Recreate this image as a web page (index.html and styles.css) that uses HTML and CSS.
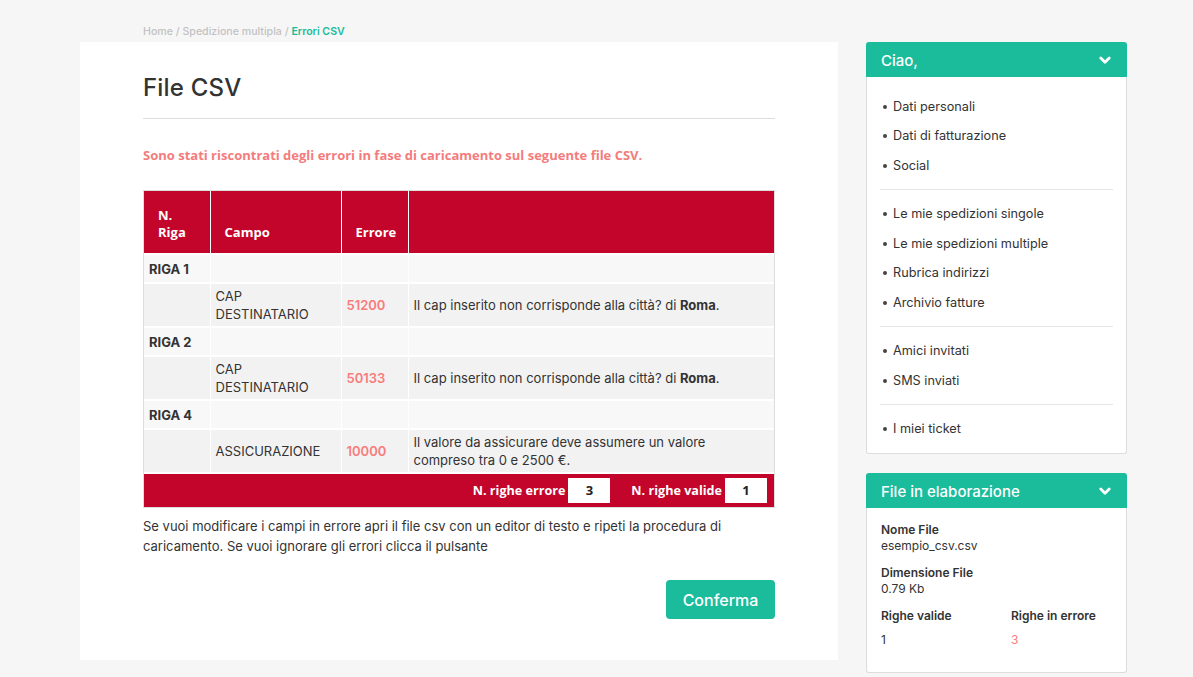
FILE: index.html
```html
<!DOCTYPE html>
<html lang="it">
<head>
<meta charset="utf-8">
<title>Errori CSV</title>
<link rel="stylesheet" href="styles.css">
</head>
<body>
<div class="page">
  <div class="main-col">
    <div class="breadcrumb">
      <span class="crumb">Home</span> <span class="sep">/</span> <span class="crumb">Spedizione multipla</span> <span class="sep">/</span> <span class="crumb active">Errori CSV</span>
    </div>
    <div class="main-card">
      <h1 class="title">File CSV</h1>
      <hr class="rule">
      <p class="error-msg">Sono stati riscontrati degli errori in fase di caricamento sul seguente file CSV.</p>
      <div class="table-wrap">
        <table class="err-table">
          <colgroup>
            <col class="c1"><col class="c2"><col class="c3"><col class="c4">
          </colgroup>
          <thead>
            <tr>
              <th>N.<br>Riga</th>
              <th>Campo</th>
              <th>Errore</th>
              <th></th>
            </tr>
          </thead>
          <tbody>
            <tr class="riga"><td class="rlabel">RIGA 1</td><td></td><td></td><td></td></tr>
            <tr class="data"><td></td><td>CAP<br>DESTINATARIO</td><td class="val">51200</td><td>Il cap inserito non corrisponde alla città? di <b>Roma</b>.</td></tr>
            <tr class="riga"><td class="rlabel">RIGA 2</td><td></td><td></td><td></td></tr>
            <tr class="data"><td></td><td>CAP<br>DESTINATARIO</td><td class="val">50133</td><td>Il cap inserito non corrisponde alla città? di <b>Roma</b>.</td></tr>
            <tr class="riga"><td class="rlabel">RIGA 4</td><td></td><td></td><td></td></tr>
            <tr class="data"><td></td><td>ASSICURAZIONE</td><td class="val">10000</td><td>Il valore da assicurare deve assumere un valore compreso tra 0 e 2500 €.</td></tr>
          </tbody>
          <tfoot>
            <tr>
              <td colspan="4">
                <div class="totals">
                  <span class="tlabel">N. righe errore</span><span class="tbox">3</span>
                  <span class="tlabel second">N. righe valide</span><span class="tbox">1</span>
                </div>
              </td>
            </tr>
          </tfoot>
        </table>
      </div>
      <p class="note">Se vuoi modificare i campi in errore apri il file csv con un editor di testo e ripeti la procedura di caricamento. Se vuoi ignorare gli errori clicca il pulsante</p>
      <div class="actions"><button class="btn">Conferma</button></div>
    </div>
  </div>
  <aside class="sidebar">
    <div class="panel">
      <div class="panel-head"><span>Ciao,</span>
        <svg class="chev" width="12" height="9" viewBox="0 0 12 9"><polyline points="1.8,2 6,6.2 10.2,2" fill="none" stroke="#fff" stroke-width="2.8" stroke-linecap="round" stroke-linejoin="round"/></svg>
      </div>
      <div class="panel-body menu">
        <ul class="group">
          <li>Dati personali</li>
          <li>Dati di fatturazione</li>
          <li>Social</li>
        </ul>
        <ul class="group">
          <li>Le mie spedizioni singole</li>
          <li>Le mie spedizioni multiple</li>
          <li>Rubrica indirizzi</li>
          <li>Archivio fatture</li>
        </ul>
        <ul class="group">
          <li>Amici invitati</li>
          <li>SMS inviati</li>
        </ul>
        <ul class="group">
          <li>I miei ticket</li>
        </ul>
      </div>
    </div>
    <div class="panel">
      <div class="panel-head"><span>File in elaborazione</span>
        <svg class="chev" width="12" height="9" viewBox="0 0 12 9"><polyline points="1.8,2 6,6.2 10.2,2" fill="none" stroke="#fff" stroke-width="2.8" stroke-linecap="round" stroke-linejoin="round"/></svg>
      </div>
      <div class="panel-body info">
        <div class="field"><div class="flabel">Nome File</div><div class="fval">esempio_csv.csv</div></div>
        <div class="field"><div class="flabel">Dimensione File</div><div class="fval">0.79 Kb</div></div>
        <div class="cols">
          <div class="col"><div class="flabel">Righe valide</div><div class="fnum">1</div></div>
          <div class="col"><div class="flabel">Righe in errore</div><div class="fnum red">3</div></div>
        </div>
      </div>
    </div>
  </aside>
</div>
</body>
</html>
```
FILE: styles.css
```css
html, body {
  margin: 0;
  padding: 0;
}
body {
  background: #f6f6f6;
  font-family: "Inter", "Liberation Sans", sans-serif;
  color: #333;
  width: 1193px;
  height: 677px;
  overflow: hidden;
}
.page {
  display: flex;
  align-items: flex-start;
  padding-left: 80px;
  gap: 28px;
}
.main-col {
  width: 758px;
}
.breadcrumb {
  height: 42px;
  box-sizing: border-box;
  padding: 26px 0 0 63px;
  font-family: "Inter", sans-serif;
  font-size: 10.6px;
  font-weight: 500;
  line-height: 12px;
  color: #c2c2c2;
}
.breadcrumb .active {
  color: #1abc9c;
  font-weight: 600;
}
.main-card {
  background: #fff;
  height: 618px;
  box-sizing: border-box;
  padding: 31px 63px 0 63px;
}
.title {
  margin: 0;
  font-family: "Inter", sans-serif;
  font-size: 24px;
  font-weight: 500;
  line-height: 29px;
  color: #333;
  letter-spacing: 0.2px;
}
.rule {
  border: 0;
  border-top: 1px solid #ddd;
  margin: 16px 0 0 0;
}
.error-msg {
  margin: 27px 0 0 0;
  font-family: "Open Sans", sans-serif;
  font-size: 13px;
  font-weight: 700;
  line-height: 18px;
  color: #f47c7c;
}
.table-wrap {
  margin-top: 26px;
  border: 1px solid #ddd;
}
.err-table {
  width: 100%;
  border-collapse: collapse;
  table-layout: fixed;
  font-size: 13px;
  line-height: 18px;
}
.c1 { width: 66px; }
.c2 { width: 131px; }
.c3 { width: 67px; }
.err-table th {
  background: #c3052b;
  color: #fff;
  font-family: "Open Sans", sans-serif;
  font-weight: 700;
  font-size: 13px;
  line-height: 17px;
  text-align: left;
  vertical-align: bottom;
  height: 63px;
  box-sizing: border-box;
  padding: 0 6px 12px 14px;
  border-left: 1px solid #fff;
  border-bottom: 1px solid #fff;
}
.err-table th:first-child { border-left: 0; }
.err-table td {
  padding: 0 5px;
  vertical-align: middle;
  border-left: 1px solid #fff;
  border-top: 2px solid #fff;
}
.err-table td:first-child { border-left: 0; }
.riga td {
  background: #f8f8f8;
  height: 27px;
}
.data td {
  background: #f2f2f2;
  height: 42px;
}
.rlabel {
  font-weight: 700;
}
.val {
  color: #f87c7c;
  font-weight: 600;
}
.err-table b { font-weight: 700; }
.err-table tfoot td {
  background: #c3052b;
  height: 33px;
  padding: 0 7px 0 0;
  border-left: 0;
}
.totals {
  display: flex;
  justify-content: flex-end;
  align-items: center;
  font-family: "Open Sans", sans-serif;
  font-weight: 700;
  font-size: 12.6px;
  color: #fff;
}
.tlabel { margin-right: 3px; }
.tlabel.second { margin-left: 21px; }
.tbox {
  display: inline-block;
  width: 42px;
  height: 25px;
  line-height: 25px;
  background: #fff;
  color: #222;
  text-align: center;
  font-size: 13px;
}
.note {
  margin: 8px 0 0 0;
  font-size: 13px;
  line-height: 20px;
  color: #333;
}
.actions {
  display: flex;
  justify-content: flex-end;
  margin-top: 24px;
}
.btn {
  width: 109px;
  height: 39px;
  border: 0;
  border-radius: 4px;
  background: #1abc9c;
  color: #fff;
  font-family: "Inter", sans-serif;
  font-size: 16px;
  font-weight: 500;
  padding: 0;
}
.sidebar {
  width: 261px;
  margin-top: 42px;
  display: flex;
  flex-direction: column;
  gap: 19px;
}
.panel {
  background: #fff;
  border: 1px solid #ddd;
  border-top: 0;
  border-radius: 3px;
}
.panel-head {
  height: 35px;
  box-sizing: border-box;
  margin: 0 -1px;
  background: #1abc9c;
  border-radius: 3px 3px 0 0;
  display: flex;
  align-items: center;
  justify-content: space-between;
  padding: 2px 16px 0 15px;
  color: #fff;
  font-family: "Inter", sans-serif;
  font-size: 15px;
  font-weight: 500;
}
.chev { display: block; }
.menu {
  padding: 14.5px 13px 9.5px 13px;
}
.group {
  list-style: none;
  margin: 0;
  padding: 0;
}
.group + .group {
  border-top: 1px solid #e6e6e6;
  margin-top: 9px;
  padding-top: 9px;
}
.group li {
  position: relative;
  padding-left: 13px;
  font-size: 12.7px;
  line-height: 29.5px;
  color: #333;
}
.group li::before {
  content: "";
  position: absolute;
  left: 3px;
  top: 13px;
  width: 4px;
  height: 4px;
  border-radius: 50%;
  background: #444;
}
.info {
  padding: 13px 14px 24px 14px;
  font-size: 12px;
  color: #333;
}
.field { margin-bottom: 10px; }
.flabel {
  font-weight: 600;
  line-height: 17px;
}
.fval { line-height: 16px; }
.cols {
  display: flex;
}
.col { width: 130px; flex-shrink: 0; }
.fnum {
  margin-top: 8px;
  line-height: 16px;
}
.red { color: #f87c7c; }
```
